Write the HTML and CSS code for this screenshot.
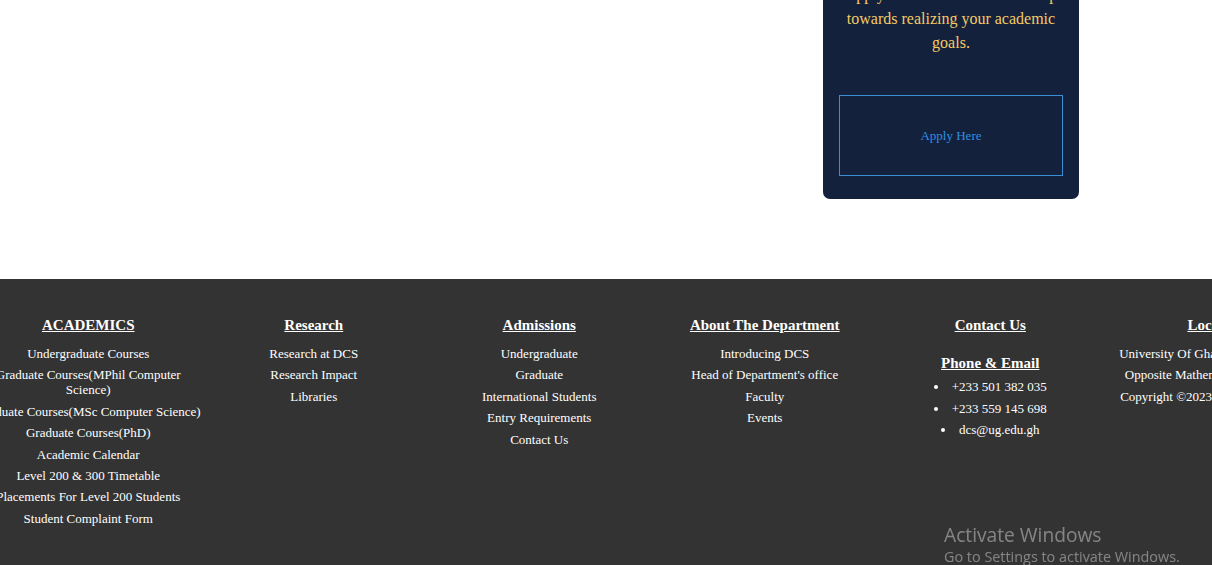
FILE: index.html
```html
<!DOCTYPE html>
<html lang="en">
<head>
<meta charset="utf-8">
<title>Department of Computer Science</title>
<link rel="stylesheet" href="styles.css">
</head>
<body>
<main class="main">
  <aside class="apply-card">
    <p class="apply-text">Apply now and take the first step towards realizing your academic goals.</p>
    <a class="apply-btn" href="#">Apply Here</a>
  </aside>
</main>
<footer class="footer">
  <div class="footer-grid">
    <section class="fcol">
      <h4 class="fhead">ACADEMICS</h4>
      <ul class="flist">
        <li>Undergraduate Courses</li>
        <li>Graduate Courses(MPhil Computer Science)</li>
        <li>Graduate Courses(MSc Computer Science)</li>
        <li>Graduate Courses(PhD)</li>
        <li>Academic Calendar</li>
        <li>Level 200 &amp; 300 Timetable</li>
        <li>Placements For Level 200 Students</li>
        <li>Student Complaint Form</li>
      </ul>
    </section>
    <section class="fcol">
      <h4 class="fhead">Research</h4>
      <ul class="flist">
        <li>Research at DCS</li>
        <li>Research Impact</li>
        <li>Libraries</li>
      </ul>
    </section>
    <section class="fcol">
      <h4 class="fhead">Admissions</h4>
      <ul class="flist">
        <li>Undergraduate</li>
        <li>Graduate</li>
        <li>International Students</li>
        <li>Entry Requirements</li>
        <li>Contact Us</li>
      </ul>
    </section>
    <section class="fcol">
      <h4 class="fhead">About The Department</h4>
      <ul class="flist">
        <li>Introducing DCS</li>
        <li>Head of Department's office</li>
        <li>Faculty</li>
        <li>Events</li>
      </ul>
    </section>
    <section class="fcol">
      <h4 class="fhead">Contact Us</h4>
      <h4 class="fhead fhead-sub">Phone &amp; Email</h4>
      <ul class="blist">
        <li>+233 501 382 035</li>
        <li>+233 559 145 698</li>
        <li>dcs@ug.edu.gh</li>
      </ul>
    </section>
    <section class="fcol">
      <h4 class="fhead">Location</h4>
      <ul class="flist">
        <li>University Of Ghana, Legon - Accra.</li>
        <li>Opposite Mathematics Department</li>
        <li>Copyright ©2023 All rights reserved</li>
      </ul>
    </section>
  </div>
</footer>
<div class="activate">
  <div class="activate-title">Activate Windows</div>
  <div class="activate-sub">Go to Settings to activate Windows.</div>
</div>
</body>
</html>
```
FILE: styles.css
```css
html, body {
  margin: 0;
  padding: 0;
  overflow: hidden;
  height: 100%;
}
body {
  font-family: "Liberation Serif", "Times New Roman", serif;
  background: #ffffff;
}
.main {
  display: flex;
  justify-content: flex-end;
  align-items: flex-start;
  padding-right: 133px;
  height: 279px;
}
.apply-card {
  width: 224px;
  margin-top: -33px;
  padding: 16px 16px 23px;
  background: #14213d;
  border-radius: 0 0 7px 7px;
  display: flex;
  flex-direction: column;
}
.apply-text {
  margin: 0;
  font-size: 16px;
  line-height: 24px;
  color: #f4cb62;
  text-align: center;
}
.apply-btn {
  margin-top: 40px;
  height: 79px;
  border: 1px solid #3a8ed4;
  display: flex;
  align-items: center;
  justify-content: center;
  font-size: 13px;
  color: #2f8fe0;
  text-decoration: none;
}
.footer {
  background: #333333;
  height: 286px;
  overflow: hidden;
  padding-top: 38px;
  box-sizing: border-box;
}
.footer-grid {
  display: grid;
  grid-template-columns: repeat(6, 225.5px);
  margin-left: -24.5px;
  width: 1353px;
}
.fcol {
  text-align: center;
  color: #ffffff;
}
.fhead {
  margin: 0 0 12px;
  font-size: 15px;
  line-height: 17px;
  font-weight: bold;
  text-decoration: underline;
  white-space: nowrap;
}
.fhead-sub {
  margin-top: 21px;
  margin-bottom: 7px;
}
.flist {
  list-style: none;
  margin: 0;
  padding: 0;
  font-size: 13px;
  line-height: 15px;
}
.flist li {
  margin-bottom: 6.4px;
}
.blist {
  list-style: disc inside;
  margin: 0;
  padding: 0;
  font-size: 13px;
  line-height: 15px;
}
.blist li {
  margin-bottom: 6.5px;
}
.activate {
  position: fixed;
  left: 944px;
  top: 522px;
  font-family: "Open Sans", "Noto Sans", sans-serif;
  color: rgba(255, 255, 255, 0.4);
  white-space: nowrap;
}
.activate-title {
  font-size: 19.2px;
  line-height: 25px;
}
.activate-sub {
  font-size: 14.4px;
  line-height: 20px;
}
```
